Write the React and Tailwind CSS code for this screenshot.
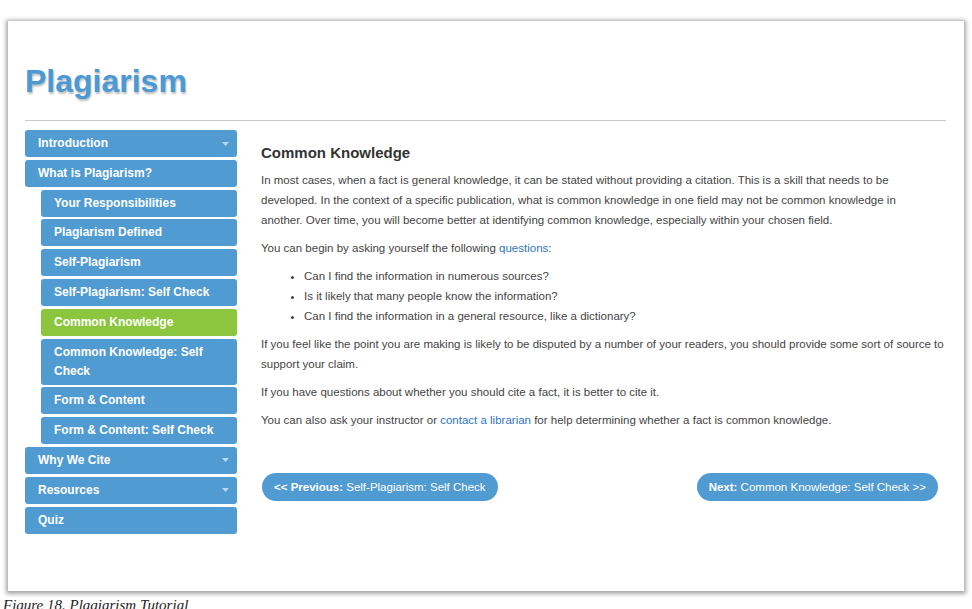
import { Fragment } from "react";

const menu = [
  { label: "Introduction", caret: true },
  { label: "What is Plagiarism?" },
  { label: "Your Responsibilities", sub: true },
  { label: "Plagiarism Defined", sub: true },
  { label: "Self-Plagiarism", sub: true },
  { label: "Self-Plagiarism: Self Check", sub: true },
  { label: "Common Knowledge", sub: true, active: true },
  { label: "Common Knowledge: Self Check", sub: true },
  { label: "Form & Content", sub: true },
  { label: "Form & Content: Self Check", sub: true },
  { label: "Why We Cite", caret: true },
  { label: "Resources", caret: true },
  { label: "Quiz" },
];

const Caret = () => (
  <svg width="7" height="4" viewBox="0 0 7 4" className="shrink-0">
    <path d="M0 0h7L3.5 4z" fill="#b9d6ee" />
  </svg>
);

const MenuItem = ({ item }) => (
  <div
    className={`flex items-center justify-between rounded-[3px] py-[4px] text-[12px] font-bold leading-[19px] text-white ${
      item.sub ? "ml-[16px] pl-[13px] pr-[18px]" : "pl-[13px] pr-[8px]"
    } ${item.active ? "bg-[#8cc63e]" : "bg-[#519bd3]"}`}
  >
    <span>{item.label}</span>
    {item.caret && <Caret />}
  </div>
);

const bullets = [
  "Can I find the information in numerous sources?",
  "Is it likely that many people know the information?",
  "Can I find the information in a general resource, like a dictionary?",
];

export default function App() {
  return (
    <div className="h-[609px] w-[972px] overflow-hidden bg-white font-['Liberation_Sans',Arial,sans-serif]">
      <div className="ml-[8px] mt-[21px] h-[570px] w-[956px] bg-white pl-[17px] pr-[18px] shadow-[0_1px_4px_2px_rgba(0,0,0,0.35)]">
        <div className="h-[100px] border-b border-[#c8c8c8] pt-[41px]">
          <h1 className="text-[32px] font-bold leading-[38px] text-[#4b9ad5] [text-shadow:1px_2px_2px_rgba(0,0,0,0.25)]">
            Plagiarism
          </h1>
        </div>

        <div className="flex gap-[24px] pt-[9px]">
          <nav className="flex w-[212px] shrink-0 flex-col gap-[2.8px]">
            {menu.map((item) => (
              <MenuItem key={item.label} item={item} />
            ))}
          </nav>

          <main className="flex-1 text-[11.5px] leading-[20px] text-[#444]">
            <h2 className="mb-[7px] mt-[13px] text-[15px] font-bold leading-[20px] text-[#333]">
              Common Knowledge
            </h2>
            <p className="mb-[8px] pr-[8px]">
              In most cases, when a fact is general knowledge, it can be stated without providing a
              citation. This is a skill that needs to be developed. In the context of a specific
              publication, what is common knowledge in one field may not be common knowledge in
              another. Over time, you will become better at identifying common knowledge,
              especially within your chosen field.
            </p>
            <p className="mb-[8px]">
              You can begin by asking yourself the following{" "}
              <a className="text-[#2f74c0]">questions</a>:
            </p>
            <ul className="mb-[8px] list-disc pl-[43px]">
              {bullets.map((b) => (
                <li key={b}>{b}</li>
              ))}
            </ul>
            <p className="mb-[8px]">
              If you feel like the point you are making is likely to be disputed by a number of your
              readers, you should provide some sort of source to support your claim.
            </p>
            <p className="mb-[8px]">
              If you have questions about whether you should cite a fact, it is better to cite it.
            </p>
            <p>
              You can also ask your instructor or{" "}
              <a className="text-[#2f74c0]">contact a librarian</a> for help determining whether a
              fact is common knowledge.
            </p>

            <div className="mt-[43px] flex justify-between pl-[1px] pr-[8px]">
              <button className="h-[28px] rounded-[14px] bg-[#519bd3] px-[12px] text-[11.5px] text-white">
                <b>&lt;&lt; Previous:</b> Self-Plagiarism: Self Check
              </button>
              <button className="h-[28px] rounded-[14px] bg-[#519bd3] px-[12px] text-[11.5px] text-white">
                <b>Next:</b> Common Knowledge: Self Check &gt;&gt;
              </button>
            </div>
          </main>
        </div>
      </div>
      <p className="ml-[3px] mt-[5px] font-['Liberation_Serif',serif] text-[15px] italic leading-[18px] text-[#222]">
        Figure 18. Plagiarism Tutorial
      </p>
    </div>
  );
}
